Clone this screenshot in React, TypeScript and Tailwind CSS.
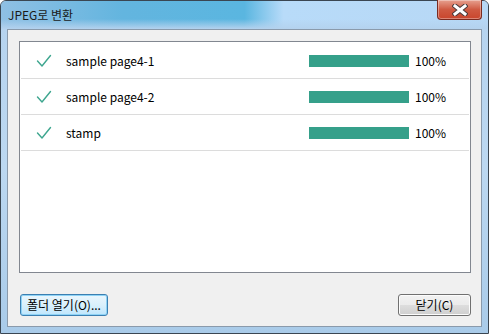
import React from 'react';

const rows = ['sample page4-1', 'sample page4-2', 'stamp'];

const Check = () => (
  <svg width="16" height="14" viewBox="0 0 16 14" className="shrink-0">
    <polyline
      points="1.5,7 6,12 14.5,1.5"
      fill="none"
      stroke="#3ea68f"
      strokeWidth="1.4"
      strokeLinecap="round"
      strokeLinejoin="round"
    />
  </svg>
);

const CloseX = () => (
  <svg width="16" height="12" viewBox="0 0 16 12">
    <path d="M3 2 L13 10 M13 2 L3 10" stroke="#4a3a3a" strokeWidth="5" strokeLinecap="square" />
    <path d="M3 2 L13 10 M13 2 L3 10" stroke="#ffffff" strokeWidth="3" strokeLinecap="square" />
  </svg>
);

const App = () => {
  return (
    <div
      className="w-[490px] h-[335px] overflow-hidden bg-white"
      style={{ fontFamily: '"Noto Sans CJK KR", "Noto Sans", sans-serif' }}
    >
      <div className="relative flex flex-col w-[489px] h-[334px] rounded-t-[6px] border border-[#3a4652] bg-gradient-to-b from-[#b5d3ef] via-[#bcd8f1] to-[#a9cbe9]">
        {/* title bar */}
        <div className="relative h-[28px] flex items-center pl-[7px] rounded-t-[5px] bg-[linear-gradient(90deg,#8fc0e4_0%,#63b5df_25%,#5ab6e0_50%,#b8dbf9_58%,#b7d8f5_100%)]">
          <div className="absolute inset-x-0 bottom-0 h-[10px] bg-gradient-to-b from-transparent to-[#b4d2ee]" />
          <span className="relative text-[12px] text-[#1a1a1a] leading-none">JPEG로 변환</span>
          <div className="absolute right-[6px] top-[-1px] w-[45px] h-[20px] rounded-b-[4px] border border-[#7a2b20] border-t-0 bg-gradient-to-b from-[#e6a08f] via-[#cf5a42] to-[#c9452c] flex items-center justify-center shadow-[inset_0_0_0_1px_rgba(255,255,255,0.35)]">
            <CloseX />
          </div>
        </div>
        {/* client */}
        <div className="mx-[6px] mb-[6px] flex-1 border border-[#8a9aab] bg-[#f0f0f0] pl-[11px] pt-[11px] flex flex-col">
          <div className="w-[452px] h-[232px] border border-[#828790] bg-white pt-[1px]">
            {rows.map((name) => (
              <div
                key={name}
                className="mx-[1px] h-[36px] border-b border-[#dcdcdc] flex items-center text-[12px] text-black"
              >
                <div className="w-[15px]" />
                <Check />
                <span className="ml-[14px] w-[243px]">{name}</span>
                <div className="w-[100px] h-[12px] bg-[#35a08a]" />
                <span className="ml-[6px]">100%</span>
              </div>
            ))}
          </div>
          <div className="flex justify-between mt-[21px] pl-[1px] w-[452px]">
            <button className="w-[88px] h-[22px] rounded-[3px] border border-[#3c7fb1] bg-gradient-to-b from-[#eaf6fd] via-[#d9f0fc] to-[#bee6fd] shadow-[inset_0_0_0_1px_#8ed3f6] text-[12px] text-black leading-none">
              폴더 열기(O)...
            </button>
            <button className="w-[73px] h-[22px] rounded-[3px] border border-[#707070] bg-[linear-gradient(180deg,#f2f2f2_0%,#ebebeb_50%,#dddddd_51%,#cfcfcf_100%)] shadow-[inset_0_0_0_1px_#fcfcfc] text-[12px] text-black leading-none">
              닫기(C)
            </button>
          </div>
        </div>
      </div>
    </div>
  );
};

export default App;
